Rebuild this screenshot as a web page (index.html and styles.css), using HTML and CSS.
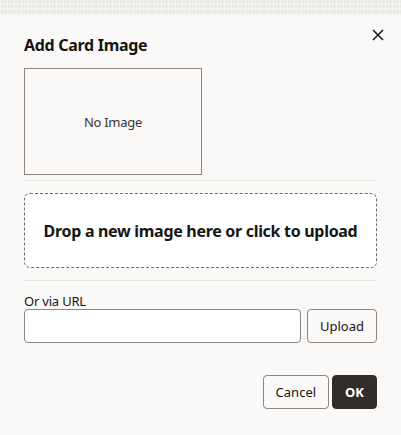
FILE: index.html
```html
<!DOCTYPE html>
<html>

<head>
  <title>Add Card Image</title>
  <link rel="stylesheet" href="styles.css">
</head>

<body>
  <div class="backdrop"></div>

  <div class="dialog">
    <div class="dialog-header">
      <h2>Add Card Image</h2>
      <button class="close-button" title="Close">
        <svg width="12" height="12" viewBox="0 0 12 12">
          <path d="M1 1 L11 11 M11 1 L1 11" stroke="#161513" stroke-width="1.5" fill="none" />
        </svg>
      </button>
    </div>

    <div class="preview">No Image</div>

    <div class="divider"></div>

    <div class="dropzone">Drop a new image here or click to upload</div>

    <div class="divider"></div>

    <label class="url-label" for="image-url">Or via URL</label>
    <div class="url-row">
      <input id="image-url" class="url-input" type="text">
      <button class="btn">Upload</button>
    </div>

    <div class="dialog-footer">
      <button class="btn">Cancel</button>
      <button class="btn btn-primary">OK</button>
    </div>
  </div>
</body>

</html>
```

FILE: styles.css
```css
html,
body {
  margin: 0;
  height: 100%;
}

body {
  font-family: "Noto Sans", "Open Sans", Arial, sans-serif;
  color: #161513;
  background-color: #fbf9f8;
  display: flex;
  flex-direction: column;
  overflow: hidden;
}

/* textured page strip peeking above the dialog */
.backdrop {
  height: 15px;
  flex-shrink: 0;
  background-color: #ebe9e6;
  background-image:
    repeating-linear-gradient(90deg, rgba(255, 255, 255, 0.5) 0 1px, transparent 1px 3px, rgba(255, 255, 255, 0.3) 3px 4px, transparent 4px 7px),
    repeating-linear-gradient(0deg, rgba(255, 255, 255, 0.35) 0 2px, transparent 2px 5px);
}

.dialog {
  flex: 1;
  background-color: #fbf9f8;
  padding: 18px 24px 0 24px;
}

.dialog-header {
  display: flex;
  justify-content: space-between;
  align-items: flex-start;
}

.dialog-header h2 {
  margin: 0;
  font-size: 16px;
  line-height: 24px;
  font-weight: 700;
  letter-spacing: -0.3px;
}

.close-button {
  width: 24px;
  height: 24px;
  margin: -10px -13px 0 0;
  padding: 0;
  border: none;
  background: transparent;
  display: flex;
  align-items: center;
  justify-content: center;
  cursor: pointer;
}

.preview {
  margin-top: 11px;
  width: 178px;
  height: 107px;
  box-sizing: border-box;
  border: 1px solid #8b8682;
  display: flex;
  align-items: center;
  justify-content: center;
  font-size: 13px;
  letter-spacing: -0.3px;
  color: #3a3631;
}

.divider {
  height: 1px;
  background-color: #e4e2df;
  margin: 5px 0 12px 0;
}

.dropzone + .divider {
  margin-top: 12px;
}

.dropzone {
  height: 75px;
  box-sizing: border-box;
  border: 1px dashed #6f6b66;
  border-radius: 6px;
  background-color: #fff;
  display: flex;
  align-items: center;
  justify-content: center;
  font-size: 16px;
  font-weight: 700;
  letter-spacing: -0.3px;
  cursor: pointer;
}

.url-label {
  display: block;
  font-size: 13px;
  line-height: 16px;
  letter-spacing: -0.2px;
}

.url-row {
  display: flex;
  gap: 6px;
}

.url-input {
  flex: 1;
  height: 34px;
  box-sizing: border-box;
  border: 1px solid #8b8682;
  border-radius: 4px;
  background-color: #fff;
  font-family: inherit;
  font-size: 13px;
  padding: 0 8px;
}

.btn {
  height: 34px;
  box-sizing: border-box;
  padding: 0 12px;
  border: 1px solid #8b8682;
  border-radius: 4px;
  background-color: #fbf9f8;
  color: #161513;
  font-family: inherit;
  font-size: 13px;
  cursor: pointer;
}

.dialog-footer {
  display: flex;
  justify-content: flex-end;
  gap: 3px;
  margin-top: 32px;
}

.btn-primary {
  background-color: #312d2a;
  border-color: #312d2a;
  color: #fff;
  font-weight: 700;
}
```
